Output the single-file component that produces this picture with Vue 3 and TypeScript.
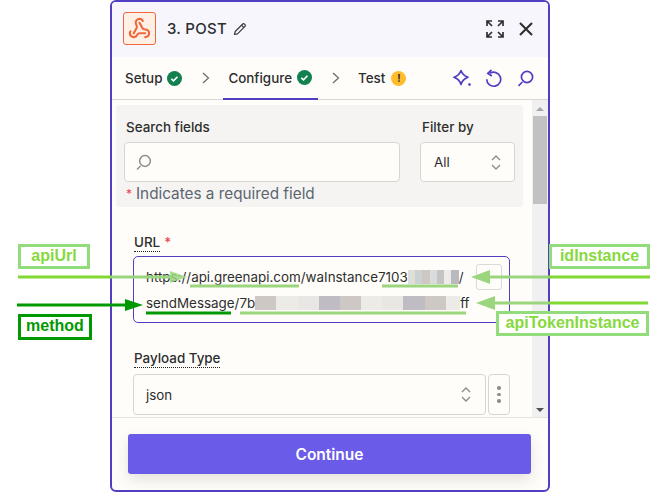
<script setup lang="ts">
const palette: string[] = ['#d2cdc9', '#e9e7e3', '#c6c3c4', '#e0ded9', '#bfbdc3', '#f1f0ec', '#d8dcdb', '#cec8c4', '#e4e2dd', '#bab9bf', '#ecebe7', '#cbd2d3']
function blocks(count: number, seed: number): string[] {
  return Array.from({ length: count }, (_, i) => palette[(i * 5 + seed * (i % 3 + 1)) % palette.length])
}
const blurA = blocks(7, 3)
const blurB = blocks(29, 7)
</script>

<template>
  <div class="stage">
    <section class="panel">
      <header class="head">
        <span class="app-icon">
          <svg width="23" height="23" viewBox="0 0 24 24" fill="none" stroke="#f0683a" stroke-width="2.2" stroke-linecap="round" stroke-linejoin="round">
            <path d="M18 16.98h-5.99c-1.1 0-1.95.94-2.48 1.9A4 4 0 0 1 2 17c.01-.7.2-1.4.57-2" />
            <path d="m6 17 3.13-5.78c.53-.97.1-2.18-.5-3.1a4 4 0 1 1 6.89-4.06" />
            <path d="m12 6 3.13 5.73C15.66 12.7 16.9 13 18 13a4 4 0 0 1 0 8" />
          </svg>
        </span>
        <span class="title">3. POST</span>
        <svg class="pencil" width="14" height="14" viewBox="0 0 14 14" fill="none" stroke="#3a3a44" stroke-width="1.2" stroke-linejoin="round">
          <path d="M1.5 12.5l.7-3L9.7 2a1.2 1.2 0 0 1 1.7 0l.6.6a1.2 1.2 0 0 1 0 1.7l-7.5 7.5z" />
          <path d="M8.5 3.2l2.3 2.3" />
        </svg>
        <span class="grow"></span>
        <svg class="expand" width="18" height="18" viewBox="0 0 18 18" fill="none" stroke="#2d2e2e" stroke-width="1.7">
          <path d="M1 6V1h5M1 1l5 5M17 6V1h-5M17 1l-5 5M1 12v5h5M1 17l5-5M17 12v5h-5M17 17l-5-5" />
        </svg>
        <svg class="close" width="14" height="14" viewBox="0 0 14 14" fill="none" stroke="#2d2e2e" stroke-width="2.1">
          <path d="M1 1l12 12M13 1L1 13" />
        </svg>
      </header>

      <nav class="tabs">
        <span class="tab setup">Setup
          <svg class="status" width="15" height="15" viewBox="0 0 15 15"><circle cx="7.5" cy="7.5" r="7.5" fill="#13804f" /><path d="M4.3 7.8l2.2 2.1 4-4.2" fill="none" stroke="#fff" stroke-width="1.6" /></svg>
        </span>
        <svg class="chev first" width="8" height="12" viewBox="0 0 8 12" fill="none" stroke="#6a6a6a" stroke-width="1.2"><path d="M1 1l5.5 5L1 11" /></svg>
        <span class="tab configure">Configure
          <svg class="status" width="15" height="15" viewBox="0 0 15 15"><circle cx="7.5" cy="7.5" r="7.5" fill="#13804f" /><path d="M4.3 7.8l2.2 2.1 4-4.2" fill="none" stroke="#fff" stroke-width="1.6" /></svg>
        </span>
        <svg class="chev second" width="8" height="12" viewBox="0 0 8 12" fill="none" stroke="#6a6a6a" stroke-width="1.2"><path d="M1 1l5.5 5L1 11" /></svg>
        <span class="tab test">Test
          <span class="warn">!</span>
        </span>
        <span class="grow"></span>
        <svg class="sparkle" width="19" height="18" viewBox="0 0 19 18" fill="none" stroke="#503fc0" stroke-width="1.7" stroke-linejoin="round">
          <path d="M8 1.5C9 4.8 11 6.8 15 8.3 11 9.8 9 11.8 8 15.5 7 11.8 5 9.8 1 8.3 5 6.8 7 4.8 8 1.5z" />
          <path d="M16.5 14.2v2.6M15.2 15.5h2.6" />
        </svg>
        <svg class="undo" width="17" height="19" viewBox="0 0 17 19" fill="none" stroke="#503fc0" stroke-width="1.7">
          <path d="M5 4.3a7 7 0 1 1-3.3 6" />
          <path d="M6.5 1L2.8 4.3l4 2.7" />
        </svg>
        <svg class="look" width="17" height="17" viewBox="0 0 17 17" fill="none" stroke="#503fc0" stroke-width="1.7">
          <circle cx="10" cy="7" r="5.6" />
          <path d="M5.4 12L1.5 15.8" />
        </svg>
      </nav>

      <div class="scroll-row">
        <main class="content">
          <div class="filters">
            <div class="filter-row">
              <div class="field search-field">
                <label class="small-label">Search fields</label>
                <div class="box search-box">
                  <svg width="17" height="17" viewBox="0 0 17 17" fill="none" stroke="#8c8c8c" stroke-width="1.5">
                    <circle cx="10" cy="7" r="5.4" />
                    <path d="M5.5 12L2 15.5" />
                  </svg>
                </div>
              </div>
              <div class="field filter-field">
                <label class="small-label">Filter by</label>
                <div class="box select-all">
                  <span>All</span>
                  <svg width="10" height="15" viewBox="0 0 10 15" fill="none" stroke="#8a8a8a" stroke-width="1.3"><path d="M1 5l4-4 4 4M1 10l4 4 4-4" /></svg>
                </div>
              </div>
            </div>
            <p class="note"><span class="star">*</span>Indicates a required field</p>
          </div>

          <div class="url-block">
            <div class="field-title"><span class="dotted">URL</span><span class="star req">*</span></div>
            <div class="url-box">
              <div class="url-line">https://api.greenapi.com/waInstance7103<span class="mosaic short"><i v-for="(c, i) in blurA" :key="i" :style="{ background: c }"></i></span>/</div>
              <div class="url-line">sendMessage/7b<span class="mosaic long"><i v-for="(c, i) in blurB" :key="i" :style="{ background: c }"></i></span>ff</div>
              <span class="insert"></span>
            </div>
          </div>

          <div class="payload-block">
            <div class="field-title"><span class="dotted">Payload Type</span></div>
            <div class="payload-row">
              <div class="box payload-select">
                <span>json</span>
                <svg width="10" height="15" viewBox="0 0 10 15" fill="none" stroke="#8a8a8a" stroke-width="1.3"><path d="M1 5l4-4 4 4M1 10l4 4 4-4" /></svg>
              </div>
              <div class="box kebab"><b></b><b></b><b></b></div>
            </div>
          </div>
        </main>
        <aside class="scrollbar">
          <span class="arrow up"></span>
          <span class="thumb"></span>
          <span class="grow"></span>
          <span class="arrow down"></span>
        </aside>
      </div>

      <footer class="foot">
        <button class="continue" type="button">Continue</button>
      </footer>
    </section>

    <svg class="marks" width="660" height="492" viewBox="0 0 660 492">
      <g fill="none" stroke-width="3">
        <path d="M18 277H111" stroke="#82d832" />
        <path d="M111 277H172" stroke="#9bd67f" />
        <path d="M650 277H549" stroke="#82d832" />
        <path d="M549 277H488" stroke="#9bd67f" />
        <path d="M648 303H549" stroke="#82d832" />
        <path d="M549 303H493" stroke="#9bd67f" />
        <path d="M17 305H128" stroke="#009900" />
        <path d="M190 286H299M382 286H458M240 313H466" stroke="#9bd67f" />
        <path d="M146 313H231" stroke="#009900" />
      </g>
      <path d="M170 271l17 6-17 6z" fill="#9bd67f" fill-opacity=".85" />
      <path d="M471 277l19-7v14z" fill="#9bd67f" />
      <path d="M476 303l19-7v14z" fill="#9bd67f" />
      <path d="M125 299l18 6-18 6z" fill="#009900" />
    </svg>
    <span class="tag light api-url">apiUrl</span>
    <span class="tag light id-instance">idInstance</span>
    <span class="tag light token">apiTokenInstance</span>
    <span class="tag dark method">method</span>
  </div>
</template>

<style>
html,
body {
  margin: 0;
  background: #fff;
}
</style>

<style scoped>
.stage {
  position: relative;
  width: 660px;
  height: 492px;
  padding-left: 110px;
  box-sizing: border-box;
  overflow: hidden;
  font-family: Inter, "Liberation Sans", sans-serif;
  color: #2d2e2e;
}
.panel {
  width: 440px;
  height: 492px;
  box-sizing: border-box;
  border: 2px solid #503fc0;
  border-radius: 6px;
  background: #fffdfa;
  display: flex;
  flex-direction: column;
  overflow: hidden;
}
.grow {
  flex: 1;
}
.head {
  height: 55px;
  flex: none;
  background: #f7f6fd;
  display: flex;
  align-items: center;
  padding: 0 15px 2px 11px;
  box-sizing: border-box;
}
.app-icon {
  width: 33px;
  height: 33px;
  box-sizing: border-box;
  border: 1px solid #f0683a;
  border-radius: 3px;
  background: #fff0e6;
  display: flex;
  align-items: center;
  justify-content: center;
}
.title {
  margin-left: 11px;
  font-size: 15px;
  font-weight: 500;
  letter-spacing: 0.3px;
}
.pencil {
  margin-left: 6px;
}
.expand {
  margin-right: 15px;
}
.tabs {
  height: 43px;
  flex: none;
  box-sizing: border-box;
  border-bottom: 1.5px solid #d9d7d3;
  display: flex;
  align-items: center;
  padding-left: 13px;
  padding-right: 14px;
}
.tab {
  display: flex;
  align-items: center;
  height: 100%;
  font-size: 13.4px;
  font-weight: 500;
  box-sizing: border-box;
}
.status {
  margin-left: 5px;
}
.chev.first {
  margin-left: 20px;
  margin-right: 13px;
}
.configure {
  padding: 0 6px 0 5px;
  border-bottom: 2px solid #503fc0;
  margin-bottom: -1px;
}
.chev.second {
  margin-left: 14px;
  margin-right: 18px;
}
.warn {
  width: 15px;
  height: 15px;
  margin-left: 6px;
  border-radius: 50%;
  background: #ffbd2e;
  color: #2d2e2e;
  font-size: 10px;
  font-weight: 700;
  display: flex;
  align-items: center;
  justify-content: center;
}
.undo {
  margin-left: 13px;
}
.look {
  margin-left: 15px;
}
.scroll-row {
  flex: 1;
  min-height: 0;
  display: flex;
}
.content {
  flex: 1;
  min-width: 0;
  overflow: hidden;
  padding: 5px 0 0 4px;
  box-sizing: border-box;
}
.filters {
  width: 407px;
  height: 102px;
  box-sizing: border-box;
  background: #f5f4f2;
  border-radius: 4px;
  padding: 15px 8px 0;
}
.filter-row {
  display: flex;
  gap: 20px;
}
.small-label {
  display: block;
  font-size: 13.4px;
  font-weight: 500;
  line-height: 15px;
  margin: 0 0 7px 2px;
}
.box {
  box-sizing: border-box;
  border: 1.5px solid #d7d5d1;
  border-radius: 4px;
  background: #fffdfa;
  display: flex;
  align-items: center;
}
.search-box {
  width: 276px;
  height: 40px;
  padding-left: 10px;
}
.select-all {
  width: 95px;
  height: 40px;
  padding: 0 13px 0 13px;
  justify-content: space-between;
  font-size: 13.4px;
}
.note {
  margin: 3px 0 0 2px;
  font-size: 15.3px;
  line-height: 18px;
  color: #5c6670;
  display: flex;
}
.star {
  color: #e8444a;
}
.note .star {
  width: 10px;
  font-size: 12px;
}
.url-block {
  margin: 27px 0 0 17px;
  width: 377px;
  position: relative;
}
.field-title {
  font-size: 13.4px;
  font-weight: 500;
  line-height: 16px;
  height: 18px;
  padding-left: 1px;
}
.dotted {
  display: inline-block;
  border-bottom: 1px dotted #222;
  height: 17px;
}
.req {
  margin-left: 4px;
}
.url-box {
  position: relative;
  box-sizing: border-box;
  height: 67px;
  margin-top: 4px;
  border: 1px solid #503fc0;
  border-radius: 5px;
  padding: 7px 12px 0;
  font-size: 13.4px;
  line-height: 26px;
}
.url-line {
  display: flex;
  align-items: center;
  height: 26px;
  white-space: nowrap;
}
.mosaic {
  display: inline-flex;
  height: 14px;
}
.mosaic.short {
  width: 51px;
}
.mosaic.long {
  width: 205px;
}
.mosaic i {
  display: block;
  flex: 1;
}
.insert {
  position: absolute;
  left: 342px;
  top: 7px;
  width: 26px;
  height: 26px;
  box-sizing: border-box;
  border: 1px solid #dcdad6;
  border-radius: 3px;
}
.payload-block {
  margin: 27px 0 0 17px;
}
.payload-row {
  display: flex;
  gap: 2px;
  margin-top: 6px;
}
.payload-select {
  width: 353px;
  height: 41px;
  flex: none;
  padding: 0 14px 0 12px;
  justify-content: space-between;
  font-size: 13.4px;
}
.kebab {
  width: 22px;
  height: 41px;
  flex: none;
  flex-direction: column;
  justify-content: center;
  gap: 3px;
}
.kebab b {
  width: 3.5px;
  height: 3.5px;
  border-radius: 50%;
  background: #8f8f8f;
}
.scrollbar {
  width: 16px;
  flex: none;
  background: #f0f0f2;
  display: flex;
  flex-direction: column;
  align-items: center;
}
.arrow {
  width: 0;
  height: 0;
  flex: none;
  border-left: 4px solid transparent;
  border-right: 4px solid transparent;
}
.arrow.up {
  margin: 7px 0 5px;
  border-bottom: 4px solid #a6a6a6;
}
.arrow.down {
  margin-bottom: 5px;
  border-top: 4px solid #505050;
}
.thumb {
  width: 14px;
  height: 88px;
  background: #c1c1c1;
}
.foot {
  height: 73px;
  flex: none;
  box-sizing: border-box;
  border-top: 1px solid #e6e4e0;
  padding: 16px 17px 0 16px;
}
.continue {
  display: block;
  width: 403px;
  height: 40px;
  border: none;
  border-radius: 3px;
  background: #6a5ce8;
  color: #fff;
  font-family: inherit;
  font-size: 15.5px;
  font-weight: 600;
  box-shadow: 0 6px 14px rgba(40, 30, 20, 0.12);
}
.marks {
  position: absolute;
  left: 0;
  top: 0;
  pointer-events: none;
}
.tag {
  position: absolute;
  box-sizing: border-box;
  display: flex;
  align-items: center;
  justify-content: center;
  background: #fff;
  font-size: 16px;
  font-weight: 700;
  padding-bottom: 2px;
  font-family: "Liberation Sans", Arial, sans-serif;
}
.tag.light {
  border: 3px solid #93dc7b;
  color: #86d93e;
}
.tag.dark {
  border: 3px solid #009900;
  color: #009900;
}
.api-url {
  left: 18px;
  top: 244px;
  width: 72px;
  height: 25px;
}
.id-instance {
  left: 549px;
  top: 244px;
  width: 101px;
  height: 25px;
}
.token {
  left: 496px;
  top: 311px;
  width: 153px;
  height: 25px;
}
.method {
  left: 18px;
  top: 314px;
  width: 74px;
  height: 26px;
}
</style>
